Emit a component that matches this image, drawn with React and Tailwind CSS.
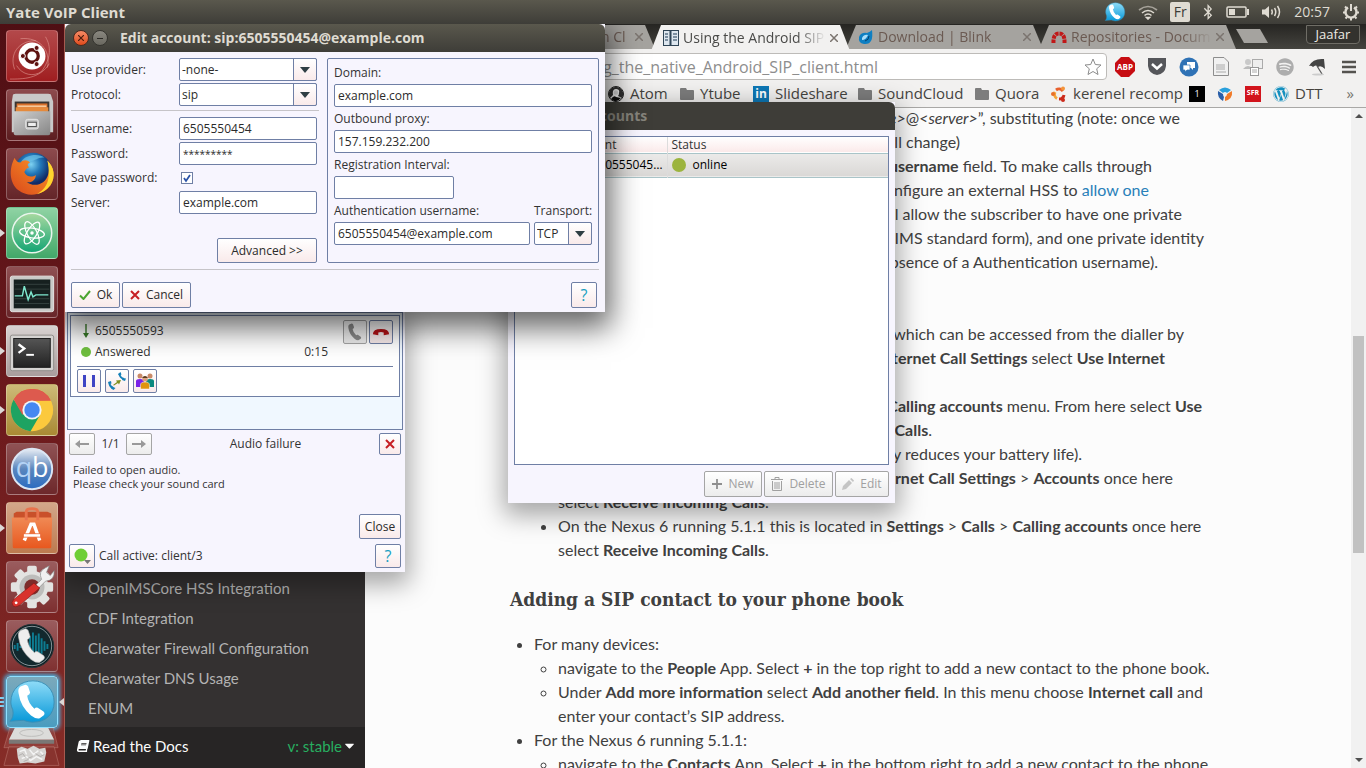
import React from "react";
import { FaBluetoothB, FaWordpress, FaSpotify, FaBook, FaCaretDown } from "react-icons/fa";

/* ---------- shared drawings ---------- */

const HANDSET =
  "M14 10 L19 8 Q21 8 22 10 L24 16 Q24 18 21 19.500 Q22 27 28.500 33 Q30 31 32 32 L38 36 Q40 38 38 40 L34 43 Q30 44 25 40 Q14 31 12 17 Q11 12 14 10Z";

function UbuntuMark({ color = "#5e1210" }) {
  return (
    <g>
      <circle cx="26" cy="26" r="6.5" fill="none" stroke={color} strokeWidth="3.4" />
      <g fill={color} stroke="#fff" strokeWidth="1">
        <circle cx="16.5" cy="26" r="2.6" />
        <circle cx="30.8" cy="17.6" r="2.6" />
        <circle cx="30.8" cy="34.4" r="2.6" />
      </g>
    </g>
  );
}

function YateBubble({ className }) {
  return (
    <svg viewBox="0 0 52 52" className={className} aria-hidden="true">
      <defs>
        <linearGradient id="bubble" x1="0" y1="0" x2="0" y2="1">
          <stop offset="0" stopColor="#8fdcf8" />
          <stop offset="1" stopColor="#0798d8" />
        </linearGradient>
      </defs>
      <path d="M27 4C40 4 49 13 49 26S40 47 27 47C23 47 20 46 17 45L3 46C6 43 7 39 6 34C5 32 4 29 4 26C4 13 14 4 27 4Z" fill="url(#bubble)" stroke="#3a8fb5" strokeWidth="1" />
      <path d={HANDSET} fill="#fff" />
    </svg>
  );
}

const tileIcons = {
  dash: (
    <g>
      <g fill="none" stroke="#e9a8a0" strokeOpacity=".55">
        <path d="M14 8C34 6 46 20 42 38" />
        <path d="M40 6C46 16 46 28 36 42C28 48 16 46 10 36" />
        <path d="M8 40C2 24 12 10 30 10" />
        <path d="M3 50C16 50 34 50 44 34" />
      </g>
      <circle cx="26" cy="26" r="14" fill="#fff" />
      <UbuntuMark />
    </g>
  ),
  files: (
    <g>
      <path d="M6 6Q6 4 9 4H43Q46 4 46 6L48 12V44H5V12Z" fill="#c9c9c9" />
      <rect x="8" y="12" width="36" height="12" fill="#3a3532" />
      <rect x="10" y="14" width="32" height="7" fill="#d9702a" />
      <rect x="11" y="16" width="30" height="2" fill="#f6c89a" />
      <rect x="9" y="18" width="34" height="5" fill="#e58a3c" />
      <path d="M7 22H45V45Q45 47 43 47H9Q7 47 7 45Z" fill="url(#steel)" />
      <rect x="19.500" y="30.500" width="13" height="10" rx="2" fill="#c4c4c4" stroke="#e8e8e8" />
      <rect x="21.500" y="33.500" width="9" height="4.500" fill="#eee" stroke="#4b4b4b" />
    </g>
  ),
  firefox: (
    <g>
      <circle cx="27" cy="24" r="20" fill="url(#globe)" />
      <path d="M15 13C19 6 33 4 39 9C33 8 30 12 24 13C20 15 18 16 15 13Z" fill="#6cc3e8" fillOpacity=".7" />
      <path d="M8 9C9 12 11 14 14 14C17 11 21 11 24 14C21 15 21 17 23 19C20 20 19 22 18 24C20 29 26 30 30 27C30 33 24 36 20 34C27 40 40 38 43 26C44 21 44 17 42 12C49 19 51 29 45 38C38 48 22 51 12 43C2 35 2 20 8 9Z" fill="url(#fox)" />
      <path d="M42 12C49 19 51 29 45 38C41 43 36 46 31 47C42 41 46 31 42 12Z" fill="#ffd52e" />
    </g>
  ),
  atom: (
    <g>
      <circle cx="26" cy="26" r="20.500" fill="url(#atomg)" stroke="#e9f5ec" strokeWidth="1.600" />
      <g fill="none" stroke="#fff" strokeWidth="1.300">
        <ellipse cx="26" cy="26" rx="13" ry="5" transform="rotate(8 26 26)" />
        <ellipse cx="26" cy="26" rx="13" ry="5" transform="rotate(62 26 26)" />
        <ellipse cx="26" cy="26" rx="13" ry="5" transform="rotate(122 26 26)" />
      </g>
      <circle cx="26" cy="26" r="1.800" fill="#fff" />
    </g>
  ),
  monitor: (
    <g>
      <rect x="3.500" y="9.500" width="45" height="37" rx="2" fill="#c9cac8" stroke="#e6e6e6" />
      <rect x="7" y="13" width="38" height="30" fill="#16201f" />
      <path d="M8 18H44M8 23H44M8 33H44M8 38H44" stroke="#35423f" />
      <path d="M8 30H16L18 20L22 34L25 26L27 31L30 29H43" fill="none" stroke="#7fe8cf" strokeWidth="1.500" />
    </g>
  ),
  terminal: (
    <g>
      <rect x="3.500" y="9.500" width="45" height="37" rx="2" fill="#d5d3d1" stroke="#8f8b88" />
      <rect x="7" y="13" width="38" height="30" fill="url(#term)" stroke="#1b1b1b" />
      <path d="M12 19L18 23.500L12 28" fill="none" stroke="#fff" strokeWidth="2.400" />
      <path d="M20 30H28" stroke="#fff" strokeWidth="2" />
    </g>
  ),
  chrome: (
    <g>
      <circle cx="26" cy="26" r="22" fill="#fbc93d" />
      <path d="M26 26L7 15A22 22 0 0 1 45.500 16L26 16.500Z" fill="#dd4b3e" />
      <path d="M7 15A22 22 0 0 0 24.500 48L34.500 31L26 26L17.500 31Z" fill="#1ea362" />
      <path d="M7 15A22 22 0 0 1 45.500 16H26L16 31Z" fill="#dd5a4e" />
      <circle cx="26" cy="26" r="10" fill="#f4f4f4" />
      <circle cx="26" cy="26" r="8" fill="#4688f1" />
    </g>
  ),
  qb: (
    <g>
      <circle cx="26" cy="26" r="21" fill="url(#qbg)" stroke="#dbe6f4" strokeWidth="2" />
      <text x="9" y="34" fontFamily="Open Sans, sans-serif" fontSize="28" fill="#b4d3f5">q</text>
      <text x="26" y="34" fontFamily="Open Sans, sans-serif" fontSize="28" fill="#fff">b</text>
    </g>
  ),
  software: (
    <g>
      <path d="M7 11L10 9H42L46 11V17H7Z" fill="#c9502a" />
      <path d="M5 15H47L46 46Q46 47 44 47H8Q6 47 6 46Z" fill="url(#bag)" />
      <path d="M20 18V9Q20 6 26 6T32 9V18" fill="none" stroke="#e8734d" strokeWidth="3" />
      <path d="M18 39L25 22H28L34 39" fill="none" stroke="#fff" strokeWidth="3.600" />
      <rect x="17" y="32" width="18" height="3.500" fill="#fff" stroke="#e8622e" strokeWidth=".8" />
    </g>
  ),
  settings: (
    <g>
      <g fill="#e3e3e1">
        <circle cx="26" cy="26" r="17" />
        {[0, 45, 90, 135].map((a) => (
          <rect key={a} x="21" y="4" width="10" height="44" rx="2" transform={`rotate(${a} 26 26)`} />
        ))}
      </g>
      <circle cx="26" cy="26" r="13" fill="#bdbdbb" />
      <circle cx="26" cy="26" r="8" fill="#7c2c2a" />
      <path d="M30 24L36 18Q32 10 40 6L44 4L41 11L45 14L49 9Q50 19 40 20L33 27Z" fill="#f0f0f0" stroke="#888" strokeWidth=".7" />
      <path d="M28 22L34 27L13 45Q8 48 6 45Q4 42 7 39Z" fill="#d8322c" stroke="#8f1715" strokeWidth=".7" />
      <circle cx="9.500" cy="42.500" r="1.500" fill="#fff" />
    </g>
  ),
  twinkle: (
    <g>
      <circle cx="26" cy="26" r="22.500" fill="#0c1b1f" stroke="#27363a" />
      <circle cx="26" cy="26" r="20.500" fill="#12282d" stroke="#a9b9bc" strokeWidth=".8" />
      <path d="M8 25V29M11 23V31M14 26V28M24 16V36M27 12V40M30 15V37M33 13V37M36 18V34M39 21V31M42 24V29" stroke="#0d7c92" strokeWidth="2" />
      <path d={HANDSET} fill="#eee" stroke="#bbb" strokeWidth=".6" />
    </g>
  ),
};

function GradientDefs() {
  return (
    <svg className="absolute size-0" aria-hidden="true">
      <defs>
        <linearGradient id="steel" x1="0" y1="0" x2="1" y2="1"><stop offset="0" stopColor="#cfcfcf" /><stop offset="1" stopColor="#868686" /></linearGradient>
        <radialGradient id="globe" cx=".45" cy=".3"><stop offset="0" stopColor="#7ed3f2" /><stop offset=".5" stopColor="#2277b8" /><stop offset="1" stopColor="#122b66" /></radialGradient>
        <linearGradient id="fox" x1="0" y1="1" x2="1" y2="0"><stop offset="0" stopColor="#d9461c" /><stop offset=".6" stopColor="#ee7a22" /><stop offset="1" stopColor="#ffc93a" /></linearGradient>
        <linearGradient id="atomg" x1="0" y1="0" x2="0" y2="1"><stop offset="0" stopColor="#a8d9a0" /><stop offset="1" stopColor="#12a473" /></linearGradient>
        <linearGradient id="term" x1="0" y1="0" x2="0" y2="1"><stop offset="0" stopColor="#555" /><stop offset="1" stopColor="#222" /></linearGradient>
        <linearGradient id="qbg" x1="0" y1="0" x2="0" y2="1"><stop offset="0" stopColor="#e8edf4" /><stop offset=".5" stopColor="#5a86bd" /><stop offset="1" stopColor="#2a6bc0" /></linearGradient>
        <linearGradient id="bag" x1="0" y1="0" x2="0" y2="1"><stop offset="0" stopColor="#f08a55" /><stop offset="1" stopColor="#e8581f" /></linearGradient>
      </defs>
    </svg>
  );
}

/* ---------- top panel ---------- */

function TopPanel() {
  return (
    <header className="flex h-6 shrink-0 items-center bg-linear-to-b from-[#5a584d] to-[#3e3d38] pr-1.5 pl-1.5 text-[#dfdbd2]">
      <span className="text-[15px] font-bold">Yate VoIP Client</span>
      <div className="ml-auto flex items-center gap-3">
        <YateBubble className="size-[22px]" />
        <svg viewBox="0 0 20 16" className="h-4 w-5" fill="none" stroke="#dfdbd2" strokeWidth="1.600" aria-hidden="true">
          <path d="M1 6Q10-1 19 6" strokeOpacity=".6" /><path d="M4 9Q10 4 16 9" /><path d="M6.500 11.500Q10 8.500 13.500 11.500" /><path d="M8.500 13.500L10 15L11.500 13.500Z" fill="#dfdbd2" />
        </svg>
        <span className="flex h-5 w-5 items-center justify-center rounded-xs bg-[#dfdbd2] text-sm text-[#3c3b37]">Fr</span>
        <FaBluetoothB className="h-4 w-3" />
        <svg viewBox="0 0 24 12" className="h-3 w-6" aria-hidden="true">
          <rect x="1" y="1" width="19" height="10" rx="1" fill="none" stroke="#dfdbd2" strokeWidth="1.500" />
          <rect x="3" y="3" width="6" height="6" fill="#dfdbd2" /><path d="M22 3V9" stroke="#dfdbd2" strokeWidth="2" />
        </svg>
        <svg viewBox="0 0 20 14" className="h-3.5 w-5" aria-hidden="true">
          <path d="M0 4.500H3L7 1V13L3 9.500H0Z" fill="#dfdbd2" />
          <path d="M9.500 4.500Q11 7 9.500 9.500M12.500 3Q15 7 12.500 11M15.500 1Q19.500 7 15.500 13" fill="none" stroke="#dfdbd2" strokeWidth="1.500" />
        </svg>
        <time className="text-sm">20:57</time>
        <svg viewBox="0 0 18 18" className="size-[18px]" fill="none" stroke="#dfdbd2" aria-hidden="true">
          <path d="M6 4.500A5.500 5.500 0 1 0 12 4.500" strokeWidth="2.400" />
          <path d="M9 1V8" strokeWidth="2" />
          <path d="M1 9.500H3M15 9.500H17M3 3.500L5 5.500M15 3.500L13 5.500M3.500 15.500L5 14M14.500 15.500L13 14M9 15V17.500" strokeWidth="2" />
        </svg>
      </div>
    </header>
  );
}

/* ---------- launcher ---------- */

const launcherItems = [
  { id: "dash", label: "Dash", tile: "bg-linear-to-b from-[#b3484a] to-[#a01d20]" },
  { id: "files", label: "Files", tile: "bg-linear-to-b from-[#8d4a4d] to-[#5c1d20]" },
  { id: "firefox", label: "Firefox", tile: "bg-linear-to-b from-[#8d4a4d] to-[#642529]" },
  { id: "atom", label: "Atom", running: true, tile: "bg-linear-to-b from-[#8fd3a4] to-[#41a869]" },
  { id: "monitor", label: "System Monitor", tile: "bg-linear-to-b from-[#8f5053] to-[#682529]" },
  { id: "terminal", label: "Terminal", running: true, tile: "bg-linear-to-b from-[#d8d2d1] to-[#a99d9c]" },
  { id: "chrome", label: "Chrome", running: true, tile: "bg-linear-to-b from-[#cdbb78] to-[#a98a33]" },
  { id: "qb", label: "qBittorrent", tile: "bg-linear-to-b from-[#8f5254] to-[#6d282b]" },
  { id: "software", label: "Software Center", running: true, tile: "bg-linear-to-b from-[#d3a78a] to-[#bd7a4f]" },
  { id: "settings", label: "Settings", tile: "bg-linear-to-b from-[#9a5c5e] to-[#7d2f30]" },
  { id: "twinkle", label: "Softphone", tile: "bg-linear-to-b from-[#9a5c5e] to-[#7f3030]" },
];

function Launcher() {
  return (
    <nav aria-label="Launcher" className="flex w-[65px] shrink-0 flex-col overflow-hidden border-r border-[#a65a50] bg-linear-to-b from-[#4f0f14] via-[#6b191c] via-50% to-[#862c27]">
      <div className="flex flex-col gap-[7px] pt-1.5">
        {launcherItems.map((it) => (
          <div key={it.id} className="flex items-center">
            <span className={`w-1.5 shrink-0 border-y-4 border-y-transparent ${it.running ? "border-l-[5px] border-l-[#dcd8d6]" : ""}`} />
            <button aria-label={it.label} className={`size-[52px] rounded-sm border border-white/25 ${it.tile}`}>
              <svg viewBox="0 0 52 52" className="size-[50px]" aria-hidden="true">{tileIcons[it.id]}</svg>
            </button>
          </div>
        ))}
      </div>
      <div className="mt-1 flex items-center">
        <span className="flex w-1.5 shrink-0 flex-col gap-0.5">
          <i className="h-0.5 w-1 bg-[#8ed3f0]" /><i className="h-0.5 w-1 bg-[#8ed3f0]" /><i className="h-0.5 w-1 bg-[#8ed3f0]" />
        </span>
        <button aria-label="Yate" className="size-[52px] rounded-sm border border-[#8fe0ff] bg-linear-to-b from-[#7ba9bb] to-[#4a9cbf] shadow-[0_0_4px_2px_#49b6e6]">
          <YateBubble className="size-[50px]" />
        </button>
        <span className="ml-auto border-y-4 border-r-[5px] border-y-transparent border-r-[#dcd8d6]" />
      </div>
      <svg viewBox="0 0 65 41" className="w-full shrink-0" aria-hidden="true">
        <path d="M10 0H54L59 20H4Z" fill="#9b4a45" fillOpacity=".6" stroke="#c08078" strokeOpacity=".5" />
        <path d="M9 19H55L60 38H4Z" fill="#8b3834" fillOpacity=".6" stroke="#c08078" strokeOpacity=".5" />
        <path d="M15 0H49L55 12H9Z" fill="#dcdcda" /><ellipse cx="32" cy="5" rx="12" ry="3.500" fill="none" stroke="#bdbdbb" />
        <rect x="9" y="12" width="46" height="4" fill="#7a7876" />
        <path d="M17 21L22 19L28 21L34 18L40 21L46 20L47 25L45 34L36 36L28 35L20 36L18 30Z" fill="#d6d4d2" />
        <path d="M20 24L25 22L27 27M30 22L34 27L39 23M22 31L27 29L31 33L37 29L43 32M41 24L44 27" fill="none" stroke="#f4f4f4" strokeWidth="1.500" />
        <path d="M19 28L23 26L26 30M28 31L33 29M36 26L41 29L45 27M24 34L29 32" fill="none" stroke="#a8a6a4" strokeWidth=".8" />
      </svg>
    </nav>
  );
}

/* ---------- browser ---------- */

const TAB_CLIP = "[clip-path:polygon(0_100%,10px_0,calc(100%-10px)_0,100%_100%)]";

function Tab({ icon, title, active, width, pad = "pl-3" }) {
  return (
    <div className={`-mr-1 flex h-6 shrink-0 items-center gap-1 pr-3 text-sm ${pad} ${TAB_CLIP} ${width} ${active ? "z-10 h-[26px] bg-[#f2f1f0] text-[#4a4a48]" : "bg-[#a5a39f] text-[#6b5a52]"}`}>
      {icon}
      <span className="flex-1 overflow-hidden whitespace-nowrap [mask-image:linear-gradient(90deg,#000_80%,transparent)]">{title}</span>
      <button aria-label="Close tab" className="shrink-0 text-[#7b746f]">
        <svg viewBox="0 0 8 8" className="size-2" stroke="currentColor" strokeWidth="1.500"><path d="M0 0L8 8M8 0L0 8" /></svg>
      </button>
    </div>
  );
}

const Folder = () => (
  <svg viewBox="0 0 14 12" className="h-3 w-3.5 shrink-0" fill="#7d7d7d" aria-hidden="true"><path d="M0 1Q0 0 1 0H6L7 2H13Q14 2 14 3V11Q14 12 13 12H1Q0 12 0 11Z" /></svg>
);

const AtomMark = () => (
  <svg viewBox="0 0 16 16" className="size-4 shrink-0" aria-hidden="true">
    <circle cx="8" cy="8" r="7.500" fill="#fff" stroke="#222" /><path d="M8 1A7 7 0 0 0 2 12L5 9Q4 3 8 3T11 7Q11 9 10 10L14 12A7 7 0 0 0 8 1Z" fill="#333" /><path d="M3 13Q6 9 8 11L13 12Q10 16 6 15Z" fill="#111" /><circle cx="8" cy="6.500" r="2.200" fill="#ddd" />
  </svg>
);

const bookmarks = [
  { w: "w-[72px]", icon: <AtomMark />, text: "Atom" },
  { w: "w-[73px]", icon: <Folder />, text: "Ytube" },
  { w: "w-[105px]", icon: <span className="flex size-4 shrink-0 items-center justify-center bg-[#0d77b5] text-xs font-bold text-white">in</span>, text: "Slideshare" },
  { w: "w-[117px]", icon: <Folder />, text: "SoundCloud" },
  { w: "w-[76px]", icon: <Folder />, text: "Quora" },
  {
    w: "w-[138px]", text: "kerenel recomp",
    icon: (
      <svg viewBox="0 0 16 16" className="size-4 shrink-0" aria-hidden="true">
        <g fill="none" strokeWidth="3"><path d="M5 4A5 5 0 0 1 12 5" stroke="#e8602c" /><path d="M13 9A5 5 0 0 1 8 13" stroke="#cc2a1a" /><path d="M6 12.500A5 5 0 0 1 4 6" stroke="#f4a63a" /></g>
        <circle cx="2" cy="8" r="2" fill="#e8702c" /><circle cx="12" cy="2.500" r="2" fill="#f4943a" /><circle cx="12" cy="14" r="2" fill="#cc2a1a" />
      </svg>
    ),
  },
  { w: "w-7", icon: <span className="flex size-4 items-center justify-center bg-black text-[9px] text-white">1</span> },
  {
    w: "w-7",
    icon: (
      <svg viewBox="0 0 16 16" className="size-4" aria-hidden="true"><path d="M2 4Q8-1 14 4L10 7Q8 5 6 7Z" fill="#2aa0dc" /><path d="M1 5L6 8Q6 10 7 11L6 15Q0 12 1 5Z" fill="#2b5fa8" /><path d="M15 5L10 8Q10 10 8 11L8 15Q16 13 15 5Z" fill="#f07a28" /></svg>
    ),
  },
  { w: "w-7", icon: <span className="flex size-4 items-center justify-center bg-[#d2141c] text-[7px] font-bold text-white">SFR</span> },
  { w: "w-16", icon: <FaWordpress className="size-4 shrink-0 text-[#1590bf]" />, text: "DTT" },
];

function BrowserChrome() {
  return (
    <div className="shrink-0 border-b border-[#a9a8a6] bg-[#f2f1f0]">
      <div className="flex h-[25px] items-start bg-linear-to-b from-[#262522] to-[#45443f] pt-px pl-[530px]">
        <Tab width="w-[60px]" pad="pl-1.5" title="n Cl" />
        <Tab
          active width="w-[199px]" title="Using the Android SIP"
          icon={
            <svg viewBox="0 0 16 16" className="size-4 shrink-0" aria-hidden="true"><rect x=".5" y=".5" width="15" height="15" fill="#dde6ee" stroke="#2f4556" /><path d="M7.500 0V16" stroke="#2f4556" strokeWidth="2" /><path d="M2 4H5M2 7H5M2 10H5M10 4H14M10 7H14M10 10H14" stroke="#5c7386" strokeWidth="1.500" /></svg>
          }
        />
        <Tab
          width="w-[197px]" title="Download | Blink"
          icon={
            <svg viewBox="0 0 16 16" className="size-4 shrink-0" aria-hidden="true"><path d="M14 1Q16 16 6 15Q0 14 1 8Q3 3 9 4Q12 3 14 1Z" fill="#0f7fc2" /><path d="M4 9Q6 5 10 6Q8 11 4 11Z" fill="#a9defa" /><path d="M7 12Q11 11 11 7" stroke="#063f6b" fill="none" /></svg>
          }
        />
        <Tab
          width="w-[197px]" title="Repositories - Docum"
          icon={
            <svg viewBox="0 0 16 12" className="h-3 w-4 shrink-0" fill="none" stroke="#c01818" strokeWidth="4" aria-hidden="true"><path d="M2.500 12Q2 2.500 8 2.500T13.500 12" strokeDasharray="3.500 .8" /></svg>
          }
        />
        <button aria-label="New tab" className="mt-1 ml-1 h-3.5 w-8 shrink-0 bg-[#a5a39f] [clip-path:polygon(0_0,24px_0,100%_100%,8px_100%)]" />
        <button className="mr-1.5 ml-auto flex h-[19px] w-[54px] items-center justify-center rounded-b-sm border border-[#6f6d66] bg-[#33322e] text-[13px] text-[#eeebe4]">Jaafar</button>
      </div>
      <div className="flex items-center gap-2 pt-1 pr-[7px]">
        <div className="flex h-[27px] flex-1 items-center rounded-r-sm border border-[#bdbbb8] bg-white pr-1">
          <input aria-label="Address" readOnly defaultValue="g_the_native_Android_SIP_client.html" className="ml-[537px] min-w-0 flex-1 bg-transparent text-base text-[#8d8d8d] outline-none" />
          <svg viewBox="0 0 18 18" className="size-[18px]" fill="none" stroke="#8b8b8b" aria-hidden="true"><path d="M9 1L11.300 6.500L17 7L12.700 10.800L14 16.500L9 13.500L4 16.500L5.300 10.800L1 7L6.700 6.500Z" /></svg>
        </div>
        <div className="grid grid-cols-[repeat(8,20px)] place-items-center gap-3">
          <svg viewBox="0 0 20 20" className="size-5" aria-label="Ad blocker"><path d="M6 0H14L20 6V14L14 20H6L0 14V6Z" fill="#c70d12" /><text x="10" y="13" textAnchor="middle" fontFamily="Open Sans, sans-serif" fontSize="8" fontWeight="700" fill="#fff">ABP</text></svg>
          <svg viewBox="0 0 20 17" className="h-[17px] w-5" aria-hidden="true"><path d="M1 0H19V8Q18 16 10 17Q2 16 1 8Z" fill="#55565a" /><path d="M5 6L10 10.500L15 6" fill="none" stroke="#fff" strokeWidth="2.500" /></svg>
          <svg viewBox="0 0 20 20" className="size-5" aria-hidden="true"><circle cx="10" cy="10" r="9.500" fill="#2f72b5" /><path d="M8 5H16V11H14V13L12 11H8Z" fill="#fff" /><path d="M4 8H11V13H8L6 15V13H4Z" fill="#fff" stroke="#2f72b5" strokeWidth=".7" /></svg>
          <svg viewBox="0 0 16 19" className="h-[19px] w-4" aria-hidden="true"><path d="M.5 .5H11L15.500 5V18.500H.5Z" fill="#f1f1f1" stroke="#8d8d8d" /><path d="M3 8H12M3 10H12M3 12H12M3 15H13" stroke="#aaa" /></svg>
          <svg viewBox="0 0 20 18" className="h-[18px] w-5" aria-hidden="true"><circle cx="5" cy="4" r="3" fill="#c9c9c9" /><path d="M0 11Q5 5 10 11Z" fill="#bbb" /><rect x="9.500" y="1.500" width="10" height="9" fill="#eee" stroke="#aaa" /><rect x="7.500" y="9.500" width="8" height="8" fill="#fff" stroke="#999" /><path d="M9 12H14M9 14H14" stroke="#aaa" /></svg>
          <FaSpotify className="size-[18px] text-[#adadad]" />
          <svg viewBox="0 0 20 18" className="h-[18px] w-5" aria-hidden="true"><path d="M2 8Q6 0 17 1L18 11Q14 7 11 9Q9 6 6 9Q4 7 2 8Z" fill="#444" /><path d="M10 8L15 16" stroke="#555" strokeWidth="1.200" /><ellipse cx="11" cy="16.500" rx="6" ry="1" fill="#ccc" /></svg>
          <svg viewBox="0 0 14 14" className="size-3.5" aria-label="Menu"><path d="M0 2H14M0 7H14M0 12H14" stroke="#55534f" strokeWidth="2.600" /></svg>
        </div>
      </div>
      <div className="flex h-[27px] items-center pr-3 pl-[543px] text-[15px] text-[#45443f]">
        {bookmarks.map((b, i) => (
          <a key={i} href="#" aria-label={b.text ? undefined : "Bookmark"} className={`flex shrink-0 items-center gap-1.5 whitespace-nowrap ${b.w}`}>{b.icon}{b.text}</a>
        ))}
        <span className="ml-auto text-[#77756f]">»</span>
      </div>
    </div>
  );
}

/* Right-set line whose start lies under another window. */
function Line({ pad, children }) {
  return <p className={`text-right whitespace-nowrap ${pad}`}>{children}</p>;
}

function Article() {
  return (
    <article className="-mt-0.5 w-[842px] shrink-0 pl-[145px] font-['Lato',sans-serif] text-base leading-6 text-[#404040]">
      <Line pad="pr-[27px]"><em>e&gt;</em>@<em>&lt;server&gt;</em>”, substituting (note: once we</Line>
      <Line pad="pr-[247px]">ill change)</Line>
      <Line pad="pr-[55px]"><b>username</b> field. To make calls through</Line>
      <Line pad="pr-[58px]">onfigure an external HSS to <a href="#" className="text-[#2980b9]">allow one</a></Line>
      <Line pad="pr-[25px]">ill allow the subscriber to have one private</Line>
      <Line pad="pr-[3px]">IMS standard form), and one private identity</Line>
      <Line pad="pr-[49px]">bsence of a Authentication username).</Line>
      <div className="mt-12">
        <Line pad="pr-[23px]">(which can be accessed from the dialler by</Line>
        <Line pad="pr-[42px]"><b>ternet Call Settings</b> select <b>Use Internet</b></Line>
      </div>
      <div className="mt-6">
        <Line pad="pr-[5px]"><b>Calling accounts</b> menu. From here select <b>Use</b></Line>
        <Line pad="pr-[275px]"><b>Calls</b>.</Line>
        <Line pad="pr-[125px]">y reduces your battery life).</Line>
        <Line pad="pr-[34px]"><b>ernet Call Settings</b> &gt; <b>Accounts</b> once here</Line>
      </div>
      <ul className="list-disc pl-12">
        <li className="list-none">select <b>Receive Incoming Calls</b>.</li>
        <li>On the Nexus 6 running 5.1.1 this is located in <b>Settings</b> &gt; <b>Calls</b> &gt; <b>Calling accounts</b> once here select <b>Receive Incoming Calls</b>.</li>
      </ul>
      <h2 className="mt-6 mb-5 font-['DejaVu_Serif_Condensed','DejaVu_Serif',serif] text-[19px] leading-[26px] font-bold whitespace-nowrap">Adding a SIP contact to your phone book</h2>
      <ul className="list-disc pl-6">
        <li>For many devices:
          <ul className="list-[circle] pl-6">
            <li className="whitespace-nowrap">navigate to the <b>People</b> App. Select <b>+</b> in the top right to add a new contact to the phone book.</li>
            <li>Under <b>Add more information</b> select <b>Add another field</b>. In this menu choose <b>Internet call</b> and enter your contact’s SIP address.</li>
          </ul>
        </li>
        <li>For the Nexus 6 running 5.1.1:
          <ul className="list-[circle] pl-6">
            <li className="whitespace-nowrap">navigate to the <b>Contacts</b> App. Select <b>+</b> in the bottom right to add a new contact to the phone</li>
          </ul>
        </li>
      </ul>
    </article>
  );
}

function Browser() {
  return (
    <div className="flex h-full flex-col bg-[#fcfcfc]">
      <BrowserChrome />
      <div className="flex min-h-0 flex-1">
        <aside className="flex w-[300px] shrink-0 flex-col justify-end bg-[#343131] font-['Lato',sans-serif] text-[15px] leading-[30px] text-[#b3b3b3]">
          <ul className="pb-1 pl-[23px]">
            {["OpenIMSCore HSS Integration", "CDF Integration", "Clearwater Firewall Configuration", "Clearwater DNS Usage", "ENUM"].map((t) => (
              <li key={t}><a href="#">{t}</a></li>
            ))}
          </ul>
          <div className="flex h-[41px] items-center justify-between bg-[#272525] pr-2 pb-1 pl-3">
            <a href="#" className="flex items-center gap-1 text-[#fcfcfc]"><FaBook className="size-3 -skew-x-12" />Read the Docs</a>
            <button className="flex items-center text-[#27ae60]">v: stable <FaCaretDown className="text-[#fcfcfc]" /></button>
          </div>
        </aside>
        <main className="min-w-0 flex-1 overflow-hidden"><Article /></main>
        <div className="flex w-[15px] shrink-0 flex-col items-center bg-[#f1f1f1]" aria-hidden="true">
          <span className="mt-1.5 border-x-4 border-b-4 border-x-transparent border-b-[#505050]" />
          <div className="flex w-full flex-1 flex-col items-center"><span className="h-[34%] shrink" /><span className="h-[34%] w-[11px] bg-[#c1c1c1]" /></div>
          <span className="mb-1.5 border-x-4 border-t-4 border-x-transparent border-t-[#505050]" />
        </div>
      </div>
    </div>
  );
}

/* ---------- desktop windows ---------- */

const BTN = "flex items-center justify-center rounded-xs border border-[#6f7fa5] bg-linear-to-b from-white to-[#f9eaea] text-[#2b2b2b]";
const BTN_OFF = "flex items-center justify-center gap-1.5 rounded-xs border border-[#a5a5a5] bg-linear-to-b from-white to-[#ececec] text-[#a0a0a0]";
const FIELD = "h-[23px] min-w-0 rounded-xs border border-[#6f7fa5] bg-white px-[3px] text-[#2b2b2b] outline-none";

function Select({ id, value, className = "" }) {
  return (
    <div className={`relative ${className}`}>
      <select id={id} defaultValue={value} className="h-[23px] w-full appearance-none rounded-xs border border-[#6f7fa5] bg-white pl-0.5 text-[#2b2b2b] outline-none"><option>{value}</option></select>
      <span className="pointer-events-none absolute inset-y-0 right-0 flex w-6 items-center justify-center rounded-r-xs border border-[#6f7fa5] bg-linear-to-b from-white to-[#f9eaea]">
        <span className="border-x-[5px] border-t-[6px] border-x-transparent border-t-[#2f3f44]" />
      </span>
    </div>
  );
}

const Cross = () => <svg viewBox="0 0 10 10" className="size-2.5" stroke="#c61f24" strokeWidth="2" aria-hidden="true"><path d="M1 1L9 9M9 1L1 9" /></svg>;
const Help = ({ className }) => <button aria-label="Help" className={`${BTN} text-base font-medium ${className}`}><span className="text-[#179ec0]">?</span></button>;

function EditAccount() {
  return (
    <section className="absolute top-0 left-0 z-30 w-[540px] bg-[#f7f5fe] text-xs text-[#333] shadow-[0_10px_28px_6px_rgba(0,0,0,0.6)]">
      <div className="flex h-7 items-center rounded-t-md bg-linear-to-b from-[#5a584d] to-[#3e3d38] pl-2 text-[#dfdbd2]">
        <button aria-label="Close window" className="flex size-4 items-center justify-center rounded-full border border-[#4a2a20] bg-linear-to-b from-[#f58a64] to-[#df4a18]"><svg viewBox="0 0 6 6" className="size-1.5" stroke="#4a1d0e" strokeWidth="1.200"><path d="M0 0L6 6M6 0L0 6" /></svg></button>
        <button aria-label="Minimize window" className="ml-[3px] flex size-4 items-center justify-center rounded-full border border-[#35342f] bg-linear-to-b from-[#8a8880] to-[#6a6860]"><span className="h-px w-1.5 bg-[#2b2a26]" /></button>
        <h1 className="ml-3 text-sm font-bold">Edit account: sip:6505550454@example.com</h1>
      </div>
      <form className="px-1.5 pt-1.5 pb-1" onSubmit={(e) => e.preventDefault()}>
        <div className="flex justify-between">
          <div className="w-[248px]">
            <div className="grid grid-cols-[108px_138px] items-center gap-y-0.5">
              <label htmlFor="provider">Use provider:</label><Select id="provider" value="-none-" />
              <label htmlFor="protocol">Protocol:</label><Select id="protocol" value="sip" />
            </div>
            <hr className="mt-1 mb-1.5 border-[#c6c4c8]" />
            <div className="grid grid-cols-[108px_138px] items-center gap-y-0.5">
              <label htmlFor="user">Username:</label><input id="user" className={FIELD} defaultValue="6505550454" />
              <label htmlFor="pass">Password:</label><input id="pass" className={`${FIELD} text-[10px]`} defaultValue="*********" />
              <label htmlFor="save">Save password:</label>
              <div className="flex h-[22px] items-center pl-0.5">
                <span className="relative flex size-3">
                  <input id="save" type="checkbox" defaultChecked className="size-3 appearance-none border border-[#6f7fa5] bg-white" />
                  <svg viewBox="0 0 12 12" className="pointer-events-none absolute inset-0 size-3" fill="none" stroke="#2a52a8" strokeWidth="1.800" aria-hidden="true"><path d="M3 6L5 9L9 3" /></svg>
                </span>
              </div>
              <label htmlFor="server">Server:</label><input id="server" className={FIELD} defaultValue="example.com" />
            </div>
            <button className={`${BTN} mt-6 mr-0.5 ml-auto h-[25px] w-[100px]`}>Advanced &gt;&gt;</button>
          </div>
          <div className="w-[272px] rounded-xs border border-[#6f7fa5] px-1.5 pt-0.5">
            <label htmlFor="domain" className="block leading-[23px]">Domain:</label>
            <input id="domain" className={`${FIELD} w-full`} defaultValue="example.com" />
            <label htmlFor="proxy" className="block leading-[23px]">Outbound proxy:</label>
            <input id="proxy" className={`${FIELD} w-full`} defaultValue="157.159.232.200" />
            <label htmlFor="interval" className="block leading-[23px]">Registration Interval:</label>
            <input id="interval" className={`${FIELD} w-[120px]`} />
            <div className="grid grid-cols-[196px_58px] justify-between">
              <label htmlFor="auth" className="leading-[23px]">Authentication username:</label>
              <label htmlFor="transport" className="leading-[23px]">Transport:</label>
              <input id="auth" className={FIELD} defaultValue="6505550454@example.com" />
              <Select id="transport" value="TCP" />
            </div>
          </div>
        </div>
        <hr className="mt-1.5 mb-3 border-[#c6c4c8]" />
        <div className="flex gap-0.5">
          <button className={`${BTN} h-[26px] w-[49px] gap-1.5`}>
            <svg viewBox="0 0 12 10" className="h-2.5 w-3" fill="none" stroke="#4ca531" strokeWidth="2" aria-hidden="true"><path d="M1 5.500L4.500 9L11 1" /></svg>Ok
          </button>
          <button className={`${BTN} h-[26px] w-[69px] gap-1.5`}><Cross />Cancel</button>
          <Help className="mr-0.5 ml-auto h-[26px] w-[26px]" />
        </div>
      </form>
    </section>
  );
}

function Accounts() {
  return (
    <section className="absolute top-[78px] left-[443px] z-20 flex h-[401px] w-[387px] flex-col bg-[#f7f5fe] text-xs text-[#333] shadow-[0_8px_24px_4px_rgba(0,0,0,0.35)]">
      <div className="flex h-7 shrink-0 items-center rounded-t-md bg-[#3e3d38] pl-[75px]"><h2 className="text-sm font-bold text-[#85837b]">Accounts</h2></div>
      <div className="mx-1.5 mt-1.5 flex-1 border border-[#6f7fa5] bg-white">
        <table className="w-full table-fixed border-collapse text-left">
          <thead>
            <tr className="h-4 border-b border-[#a9c4c8] bg-linear-to-b from-white to-[#fbeaea]">
              <th className="w-[152px] border-r border-[#dcdcdc] pr-[50px] text-right leading-[15px] font-normal">Account</th>
              <th className="pl-1 leading-[15px] font-normal">Status</th>
            </tr>
          </thead>
          <tbody>
            <tr className="h-6 border-b border-[#a9c4c8] bg-linear-to-b from-[#ecebea] to-[#dad8d6] text-black">
              <td className="border-r border-[#dcdcdc] pr-1 text-right">650555045…</td>
              <td className="pl-1"><span className="flex items-center gap-[7px]"><i className="size-3.5 rounded-full bg-[#9cb43e]" />online</span></td>
            </tr>
          </tbody>
        </table>
      </div>
      <div className="flex shrink-0 justify-end gap-0.5 px-1.5 pt-1.5 pb-1.5">
        <button disabled className={`${BTN_OFF} h-[26px] w-[58px]`}><svg viewBox="0 0 10 10" className="size-2.5" stroke="#8f8f8f" strokeWidth="1.800" aria-hidden="true"><path d="M5 0V10M0 5H10" /></svg>New</button>
        <button disabled className={`${BTN_OFF} h-[26px] w-[69px]`}><svg viewBox="0 0 12 14" className="h-3.5 w-3" fill="none" stroke="#a0a0a0" aria-hidden="true"><path d="M0 2.500H12M4 2V.5H8V2M1.500 4V13.500H10.500V4M4 5V12M6 5V12M8 5V12" /></svg>Delete</button>
        <button disabled className={`${BTN_OFF} h-[26px] w-[54px]`}><svg viewBox="0 0 12 12" className="size-3" fill="#c4c4c4" aria-hidden="true"><path d="M8 1L9.500 0L12 2.500L11 4ZM7 2L10 5L4 11L0 12L1 8Z" /></svg>Edit</button>
      </div>
    </section>
  );
}

const ICON_BTN = "size-6";

function YateClient() {
  return (
    <section className="absolute top-[286px] left-0 z-10 w-[340px] bg-[#f7f5fe] px-0.5 pt-0.5 pb-1 text-xs text-[#333] shadow-[0_8px_24px_4px_rgba(0,0,0,0.35)]">
      <div className="h-[118px] border border-[#6f7fa5] bg-[#f0f8ff] p-0.5">
        <div className="h-[82px] border border-[#6f7fa5] bg-white px-1.5 pt-1">
          <div className="flex h-[47px] border-b border-[#6f7fa5]">
            <div className="grid flex-1 grid-cols-[18px_1fr] content-start items-center leading-[21px]">
              <svg viewBox="0 0 8 14" className="ml-[5px] h-3.5 w-2" fill="#3a7d2a" aria-hidden="true"><path d="M3.300 0H4.700V9H7L4 14L1 9H3.300Z" /></svg>
              <span>6505550593</span>
              <i className="ml-1 size-2.5 rounded-full bg-[#6fbf3f]" />
              <span className="flex justify-between pr-[15px]"><span>Answered</span><time>0:15</time></span>
            </div>
            <div className="flex gap-0.5">
              <button disabled aria-label="Answer" className={`${BTN_OFF} ${ICON_BTN}`}><svg viewBox="6 5 40 42" className="size-5" aria-hidden="true"><path d={HANDSET} fill="#8d8d8d" /></svg></button>
              <button aria-label="Hang up" className={`${BTN} ${ICON_BTN}`}><svg viewBox="0 0 20 9" className="w-[18px]" aria-hidden="true"><path d="M1 7Q1 1 10 1T19 7L13 8V5Q10 4 7 5V8Z" fill="#bb1216" /></svg></button>
            </div>
          </div>
          <div className="mt-0.5 flex gap-1">
            <button aria-label="Hold" className={`${BTN} ${ICON_BTN} gap-1.5`}><i className="h-3 w-[3px] bg-[#3f44c4]" /><i className="h-3 w-[3px] bg-[#3f44c4]" /></button>
            <button aria-label="Transfer" className={`${BTN} ${ICON_BTN}`}>
              <svg viewBox="0 0 20 20" className="size-5" aria-hidden="true"><path d="M2.500 11Q2 15 6 17M12.500 3Q13 7 17 8" fill="none" stroke="#1580b8" strokeWidth="2" /><path d="M1 11L4 10L4.500 12.500L2 13ZM5 15.500L8.500 17L6.500 19L4 17.500ZM11 3L13.500 1L14.500 3.500L12 4.500ZM15.500 7L19 7.500L18 10L15 9Z" fill="#1580b8" /><path d="M6 14L10 11L9 9.500L14 9L12 13.500L11 12L7 14.500Z" fill="#7f9020" /></svg>
            </button>
            <button aria-label="Conference" className={`${BTN} ${ICON_BTN}`}>
              <svg viewBox="0 0 20 20" className="size-5" aria-hidden="true"><circle cx="5" cy="5" r="2.500" fill="#c98a68" /><circle cx="15" cy="5" r="2.500" fill="#c98a68" /><path d="M1 16V10Q1 8 5 8T9 10V16Z" fill="#7a22e8" /><path d="M11 16V10Q11 8 15 8T19 10V16Z" fill="#0b8a80" /><circle cx="10" cy="8" r="2.800" fill="#d8a080" /><path d="M7 7Q10 3 13 7Z" fill="#5a3a1e" /><path d="M5.500 18V14Q5.500 11 10 11T14.500 14V18Z" fill="#e0940c" stroke="#fff" strokeWidth=".5" /></svg>
            </button>
          </div>
        </div>
      </div>
      <div className="mt-[3px] flex items-center px-0.5">
        <button disabled aria-label="Previous" className={`${BTN_OFF} h-[22px] w-[26px]`}><svg viewBox="0 0 14 8" className="w-3.5" aria-hidden="true"><path d="M0 4L5 0V3H14V5H5V8Z" fill="#999" /></svg></button>
        <span className="w-[31px] text-center">1/1</span>
        <button disabled aria-label="Next" className={`${BTN_OFF} h-[22px] w-[26px]`}><svg viewBox="0 0 14 8" className="w-3.5" aria-hidden="true"><path d="M14 4L9 0V3H0V5H9V8Z" fill="#999" /></svg></button>
        <span className="flex-1 text-center">Audio failure</span>
        <button aria-label="Dismiss" className={`${BTN} h-[22px] w-[22px]`}><Cross /></button>
      </div>
      <p className="mt-2 ml-1.5 h-[51px] text-[11px] leading-3.5">Failed to open audio.<br />Please check your sound card</p>
      <button className={`${BTN} mr-0.5 ml-auto h-[25px] w-[42px]`}>Close</button>
      <div className="mt-[5px] flex items-center gap-1 px-0.5">
        <button aria-label="Status" className={`${BTN} h-6 w-[26px]`}><svg viewBox="0 0 20 18" className="w-5" aria-hidden="true"><circle cx="9" cy="8" r="6.500" fill="#6fce34" /><path d="M12 13H19L15.500 17Z" fill="#777" /></svg></button>
        Call active: client/3
        <Help className="ml-auto h-6 w-[26px]" />
      </div>
    </section>
  );
}

export default function App() {
  return (
    <div className="flex h-screen flex-col overflow-hidden font-['Open_Sans',sans-serif]">
      <GradientDefs />
      <TopPanel />
      <div className="flex min-h-0 flex-1">
        <Launcher />
        <div className="relative min-w-0 flex-1 overflow-hidden">
          <Browser />
          <YateClient />
          <Accounts />
          <EditAccount />
        </div>
      </div>
    </div>
  );
}
